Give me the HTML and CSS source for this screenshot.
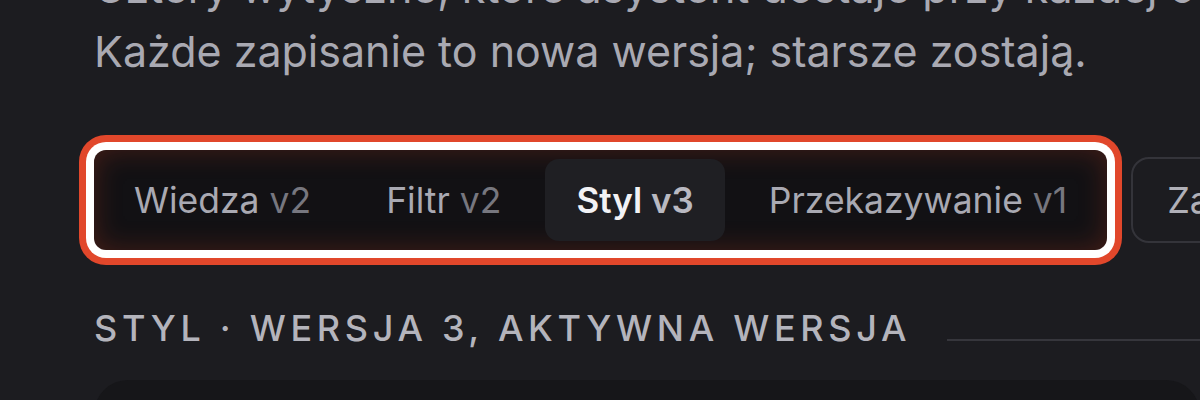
FILE: index.html
```html
<!DOCTYPE html>
<html lang="pl">
<head>
<meta charset="utf-8">
<title>Wytyczne</title>
<link rel="stylesheet" href="styles.css">
</head>
<body>
<main class="page">
  <p class="intro">Cztery wytyczne, które asystent dostaje przy każdej odpowiedzi.<br>Każde zapisanie to nowa wersja; starsze zostają.</p>

  <div class="toolbar">
    <div class="tablist" role="tablist">
      <button class="tab" role="tab"><span class="name">Wiedza</span> <span class="ver">v2</span></button>
      <button class="tab" role="tab"><span class="name">Filtr</span> <span class="ver">v2</span></button>
      <button class="tab active" role="tab" aria-selected="true"><span class="name">Styl</span> <span class="ver">v3</span></button>
      <button class="tab" role="tab"><span class="name">Przekazywanie</span> <span class="ver">v1</span></button>
    </div>
    <button class="ghost">Zapisz nową wersję</button>
  </div>

  <div class="section-head">
    <h2 class="section-title">Styl · wersja 3, aktywna wersja</h2>
    <div class="rule"></div>
  </div>

  <div class="card"></div>
</main>
</body>
</html>
```

FILE: styles.css
```css
html, body {
  margin: 0;
  padding: 0;
  background: #1c1c20;
  overflow: hidden;
  height: 400px;
}

.page {
  padding-left: 94px;
  font-family: "Inter", "Noto Sans", sans-serif;
  color: #a9a9b2;
}

.intro {
  margin: -45px 0 0 0;
  font-size: 43px;
  line-height: 64px;
  white-space: nowrap;
  color: #a9a9b2;
}

.toolbar {
  display: flex;
  align-items: center;
  gap: 24px;
  margin-top: 67px;
  white-space: nowrap;
}

.tablist {
  display: flex;
  align-items: center;
  gap: 13px;
  padding: 9px;
  border-radius: 12px;
  background: #121114;
  box-shadow:
    inset 0 0 28px rgba(190, 60, 30, 0.3),
    0 0 0 8px #ffffff,
    0 0 0 15px #e1472b;
  flex: none;
}

.tab {
  height: 82px;
  padding: 0 31px;
  border: 0;
  border-radius: 14px;
  background: transparent;
  font-family: inherit;
  font-size: 35.5px;
  color: #a9a9b2;
  cursor: pointer;
}

.tab .ver {
  color: #77777f;
}

.tab.active {
  background: #1f1f23;
  font-weight: 600;
  font-size: 35px;
  color: #f2f2f5;
}

.tab.active .ver {
  color: #b9b9c1;
}

.ghost {
  flex: none;
  height: 86px;
  padding: 0 34px;
  border: 2px solid #34343a;
  border-radius: 18px;
  background: transparent;
  font-family: inherit;
  font-size: 36px;
  color: #b0b0b8;
}

.section-head {
  display: flex;
  align-items: baseline;
  gap: 36px;
  margin-top: 56px;
}

.section-title {
  margin: 0;
  font-size: 36px;
  font-weight: 500;
  letter-spacing: 0.13em;
  text-transform: uppercase;
  color: #b4b4bc;
  white-space: nowrap;
  line-height: 44px;
}

.rule {
  flex: 1;
  height: 2px;
  background: #36363c;
}

.card {
  margin-top: 30px;
  height: 120px;
  border-radius: 34px;
  background: #161619;
}
```
